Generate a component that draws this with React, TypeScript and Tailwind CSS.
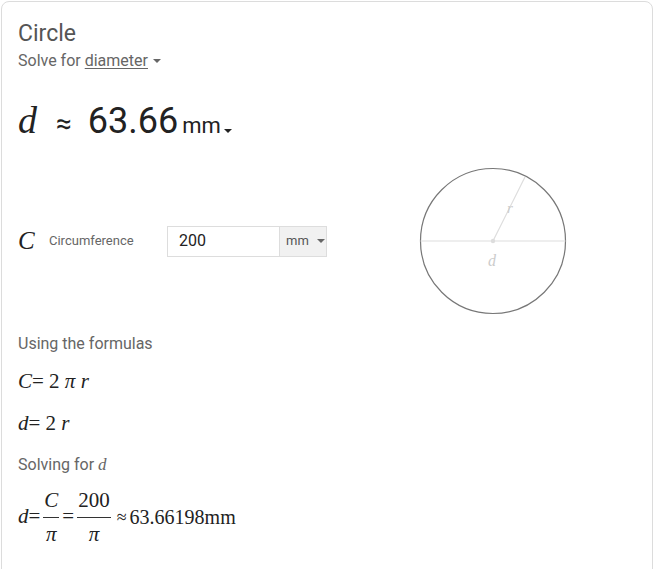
import React from 'react';

const sans = { fontFamily: 'Roboto, Arial, sans-serif' };
const serif = { fontFamily: '"Liberation Serif", "Times New Roman", serif' };

const Caret: React.FC<{ className?: string }> = ({ className }) => (
  <span className={`inline-block w-0 h-0 border-l-[4px] border-r-[4px] border-t-[4px] border-l-transparent border-r-transparent ${className ?? ''}`} />
);

const CircleDiagram: React.FC = () => (
  <svg width="150" height="150" viewBox="0 0 150 150">
    <circle cx="75" cy="75" r="72.5" fill="none" stroke="#777" strokeWidth="1.2" />
    <line x1="2.5" y1="75" x2="147.5" y2="75" stroke="#ddd" strokeWidth="1.2" />
    <line x1="75" y1="75" x2="107" y2="11" stroke="#ddd" strokeWidth="1.2" />
    <circle cx="75" cy="75" r="2.2" fill="#ddd" />
    <text x="89" y="47" fontSize="15" fontStyle="italic" fill="#ccc" fontFamily='"Liberation Serif", serif'>r</text>
    <text x="70" y="100" fontSize="16" fontStyle="italic" fill="#ccc" fontFamily='"Liberation Serif", serif'>d</text>
  </svg>
);

const Frac: React.FC<{ top: string; bottom: string; italicTop?: boolean }> = ({ top, bottom, italicTop }) => (
  <span className="inline-flex flex-col items-center mx-[3px]">
    <span className={`leading-[22px] pb-[6px] px-[1px] ${italicTop ? 'italic' : ''}`}>{top}</span>
    <span className="block w-full h-px bg-[#333]" />
    <span className="leading-[22px] pt-[5px] italic">{bottom}</span>
  </span>
);

export default function App() {
  return (
    <div className="bg-white w-[666px] h-[569px] overflow-hidden pl-px pt-px">
      <div className="w-[652px] h-[600px] border border-[#dcdcdc] rounded-[8px] pl-4 pt-[16px] text-[#222]">
        <div style={sans} className="text-[23px] leading-[32px] text-[#555]">Circle</div>
        <div style={sans} className="text-[16px] leading-[22px] text-[#666] flex items-center">
          <span>Solve for&nbsp;</span>
          <span className="underline underline-offset-2">diameter</span>
          <Caret className="ml-[5px] border-t-[#666]" />
        </div>

        <div className="flex items-baseline mt-[22px] h-[46px]">
          <span style={serif} className="italic text-[38px] leading-[46px] text-[#222]">d</span>
          <span style={sans} className="text-[28px] ml-[19px] text-[#222]">≈</span>
          <span style={sans} className="text-[36px] ml-[16px] text-[#222]">63.66</span>
          <span style={sans} className="text-[22px] ml-[4px] text-[#222]">mm</span>
          <Caret className="ml-[3px] mb-[9px] border-t-[#222]" />
        </div>

        <div className="flex items-center mt-[26px]">
          <span style={serif} className="italic text-[25px] w-[31px] text-[#222]">C</span>
          <span style={sans} className="text-[13px] text-[#666] w-[118px]">Circumference</span>
          <div className="flex h-[31px] border border-[#ddd]">
            <div style={sans} className="w-[111px] pl-[11px] flex items-center text-[16px] text-[#222] bg-white">200</div>
            <div style={sans} className="w-[47px] bg-[#f1f1f1] border-l border-[#ddd] flex items-center pl-[6px] text-[13px] text-[#555]">
              mm
              <Caret className="ml-[8px] border-t-[#666]" />
            </div>
          </div>
          <div className="ml-[91px]">
            <CircleDiagram />
          </div>
        </div>

        <div style={sans} className="text-[16px] text-[#666] mt-[16px] leading-[24px]">Using the formulas</div>
        <div style={serif} className="text-[21px] leading-[28px] mt-[11px] text-[#222]">
          <span className="italic">C</span>= 2 <span className="italic">π</span> <span className="italic">r</span>
        </div>
        <div style={serif} className="text-[21px] leading-[28px] mt-[14px] text-[#222]">
          <span className="italic">d</span>= 2 <span className="italic">r</span>
        </div>
        <div style={sans} className="text-[16px] text-[#666] mt-[16px] leading-[24px]">
          Solving for <span style={serif} className="italic text-[17px]">d</span>
        </div>
        <div style={serif} className="text-[21px] text-[#222] mt-[12px] flex items-center">
          <span className="italic">d</span>=
          <Frac top="C" bottom="π" italicTop />
          =
          <Frac top="200" bottom="π" />
          <span className="text-[18px] mx-[3px]">≈</span>
          <span className="text-[20px]">63.66198mm</span>
        </div>
      </div>
    </div>
  );
}
